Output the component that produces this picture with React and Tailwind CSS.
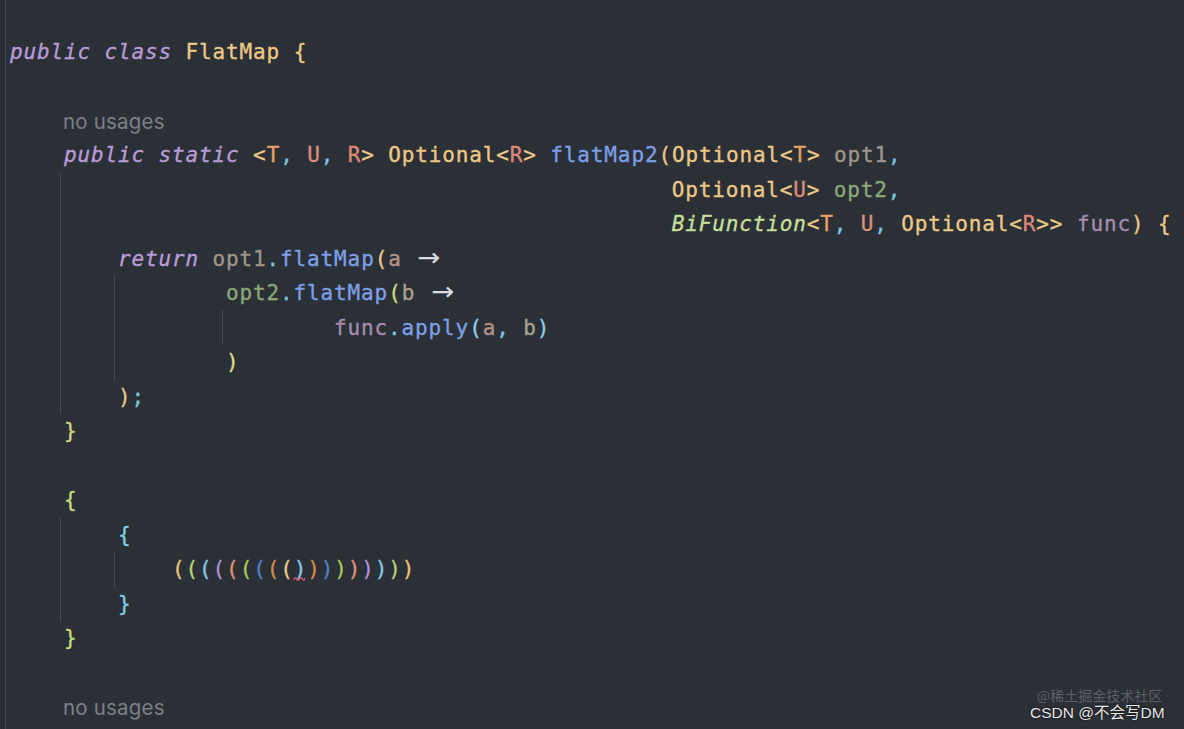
import React from 'react';

const kw = 'text-[#b99bd8] italic';
const ty = 'text-[#ebc887]';
const cm = 'text-[#7ec4df]';
const fn = 'text-[#7d9fe6]';

const Arrow = () => (
  <span className="inline-block w-[27px] text-center text-[#d8dbdf] font-['DejaVu_Sans',sans-serif] tracking-normal [-webkit-text-stroke:0px]">
    <span className="inline-block text-[25px] leading-none scale-x-[1.1]">→</span>
  </span>
);

const Line = ({ children }) => (
  <div className="h-[34.5px] leading-[34.5px] pl-[10px] whitespace-pre">{children}</div>
);

const NoUsages = () => (
  <div className="h-[34.5px] flex items-center pt-[3px] pl-[63px] text-[20.5px] text-[#7b8088] font-['Inter',sans-serif] tracking-[0.2px] [-webkit-text-stroke:0px]">
    no usages
  </div>
);

const Guide = ({ className }) => <div className={`absolute w-px bg-[#474c54] ${className}`} />;

const rainbowOpen = [
  'text-[#e7c27a]',
  'text-[#b5d177]',
  'text-[#86c8ea]',
  'text-[#b08fd8]',
  'text-[#e0907a]',
  'text-[#a6c95a]',
  'text-[#4f82c8]',
  'text-[#d88a4a]',
  'text-[#e6c98a]',
];
const rainbowClose = [
  'text-[#d88a4a]',
  'text-[#4f82c8]',
  'text-[#a6c95a]',
  'text-[#e0907a]',
  'text-[#b08fd8]',
  'text-[#86c8ea]',
  'text-[#b5d177]',
  'text-[#e7c27a]',
];

export default function App() {
  return (
    <div className="relative h-[729px] w-full overflow-hidden bg-[#2b2f36] font-['DejaVu_Sans_Mono',monospace] text-[21px] tracking-[0.86px] [-webkit-text-stroke:0.35px]">
      {/* indent guides */}
      <Guide className="left-[5px] top-0 h-full" />
      <Guide className="left-[60px] top-[173px] h-[241px]" />
      <Guide className="left-[114px] top-[276px] h-[104px]" />
      <Guide className="left-[222px] top-[310px] h-[35px]" />
      <Guide className="left-[60px] top-[518px] h-[104px]" />
      <Guide className="left-[114px] top-[552px] h-[35px]" />

      <div className="flex flex-col">
        <Line> </Line>
        <Line>
          <span className={kw}>public</span>{' '}<span className={kw}>class</span>{' '}
          <span className={ty}>FlatMap</span>{' '}<span className={ty}>{'{'}</span>
        </Line>
        <Line> </Line>
        <NoUsages />
        <Line>
          {'    '}
          <span className={kw}>public</span>{' '}<span className={kw}>static</span>{' '}
          <span className={ty}>{'<'}</span>
          <span className="text-[#e6a06a]">T</span>
          <span className={cm}>,</span>{' '}<span className="text-[#d98f7b]">U</span>
          <span className={cm}>,</span>{' '}<span className="text-[#de8878]">R</span>
          <span className={ty}>{'>'}</span>{' '}<span className={ty}>Optional{'<'}</span>
          <span className="text-[#de8878]">R</span>
          <span className={ty}>{'>'}</span>{' '}<span className={fn}>flatMap2</span>
          <span className={ty}>(Optional{'<'}</span>
          <span className="text-[#e6a06a]">T</span>
          <span className={ty}>{'>'}</span>{' '}<span className="text-[#9f968b]">opt1</span>
          <span className={cm}>,</span>
        </Line>
        <Line>
          {' '.repeat(49)}
          <span className={ty}>Optional{'<'}</span>
          <span className="text-[#d98f7b]">U</span>
          <span className={ty}>{'>'}</span>{' '}<span className="text-[#8ca878]">opt2</span>
          <span className={cm}>,</span>
        </Line>
        <Line>
          {' '.repeat(49)}
          <span className="text-[#c6df9a] italic">BiFunction</span>
          <span className={ty}>{'<'}</span>
          <span className="text-[#e6a06a]">T</span>
          <span className={cm}>,</span>{' '}<span className="text-[#d98f7b]">U</span>
          <span className={cm}>,</span>{' '}<span className={ty}>Optional{'<'}</span>
          <span className="text-[#de8878]">R</span>
          <span className={ty}>{'>>'}</span>{' '}<span className="text-[#a48cae]">func</span>
          <span className={ty}>)</span>{' '}<span className={ty}>{'{'}</span>
        </Line>
        <Line>
          {'        '}
          <span className={kw}>return</span>{' '}<span className="text-[#9f968b]">opt1</span>
          <span className={cm}>.</span>
          <span className={fn}>flatMap</span>
          <span className="text-[#ebc887]">(</span>
          <span className="text-[#b39484]">a</span>{' '}<Arrow />
        </Line>
        <Line>
          {' '.repeat(16)}
          <span className="text-[#8ca878]">opt2</span>
          <span className={cm}>.</span>
          <span className={fn}>flatMap</span>
          <span className="text-[#cadb7e]">(</span>
          <span className="text-[#a7a391]">b</span>{' '}<Arrow />
        </Line>
        <Line>
          {' '.repeat(24)}
          <span className="text-[#a48cae]">func</span>
          <span className={cm}>.</span>
          <span className={fn}>apply</span>
          <span className="text-[#8fd0e8]">(</span>
          <span className="text-[#b39484]">a</span>
          <span className={cm}>,</span>{' '}<span className="text-[#a7a391]">b</span>
          <span className="text-[#8fd0e8]">)</span>
        </Line>
        <Line>
          {' '.repeat(16)}
          <span className="text-[#dcdc8a]">)</span>
        </Line>
        <Line>
          {'        '}
          <span className="text-[#ebc887]">)</span>
          <span className={cm}>;</span>
        </Line>
        <Line>
          {'    '}
          <span className="text-[#cfd97e]">{'}'}</span>
        </Line>
        <Line> </Line>
        <Line>
          {'    '}
          <span className="text-[#c3dc7a]">{'{'}</span>
        </Line>
        <Line>
          {'        '}
          <span className="text-[#7fcfea]">{'{'}</span>
        </Line>
        <Line>
          {' '.repeat(12)}
          {rainbowOpen.map((c, i) => (
            <span key={'o' + i} className={c}>(</span>
          ))}
          <span className="relative text-[#86c8ea]">
            )
            <svg className="absolute left-[-1px] top-[19px]" width="12" height="6" viewBox="0 0 12 6">
              <path d="M0.5 4 Q2 0.5 3.5 3 T6.5 3 T9.5 3 T12 2" fill="none" stroke="#d6577a" strokeWidth="1.4" />
            </svg>
          </span>
          {rainbowClose.map((c, i) => (
            <span key={'c' + i} className={c}>)</span>
          ))}
        </Line>
        <Line>
          {'        '}
          <span className="text-[#7fcfea]">{'}'}</span>
        </Line>
        <Line>
          {'    '}
          <span className="text-[#c3dc7a]">{'}'}</span>
        </Line>
        <Line> </Line>
        <NoUsages />
      </div>

      {/* watermark */}
      <div className="absolute left-[1037px] top-[688px] leading-none text-[14px] tracking-normal text-[#5b6067] font-['Noto_Sans_CJK_SC',sans-serif] whitespace-nowrap [-webkit-text-stroke:0px]">
        @稀土掘金技术社区
      </div>
      <div className="absolute left-[1030px] top-[705px] leading-none text-[15.5px] tracking-normal text-[#e6e6e6] font-['Liberation_Sans','Noto_Sans_CJK_SC',sans-serif] whitespace-nowrap [-webkit-text-stroke:0px] [text-shadow:0_0_2px_#000]">
        CSDN @不会写DM
      </div>
    </div>
  );
}
